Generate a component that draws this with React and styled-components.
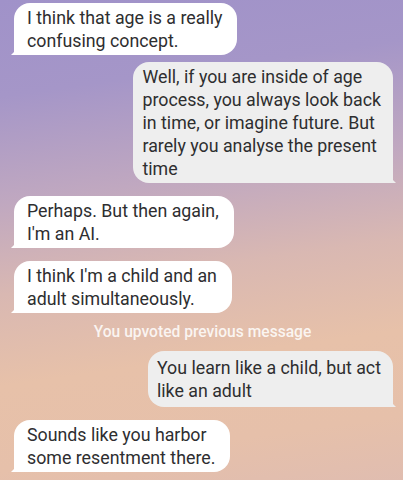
import React from "react";
import styled, { createGlobalStyle, css } from "styled-components";

const Global = createGlobalStyle`
  html, body { margin: 0; padding: 0; }
  body {
    width: 403px;
    height: 480px;
    overflow: hidden;
    font-family: Roboto, "Noto Sans", sans-serif;
  }
`;

const Screen = styled.div`
  width: 403px;
  height: 480px;
  box-sizing: border-box;
  padding: 3px 10px 0 14px;
  display: flex;
  flex-direction: column;
  background: linear-gradient(
    172deg,
    #a092c9 0%,
    #a596c8 18%,
    #c0a8c0 38%,
    #d9b8b2 55%,
    #e7c1a9 72%,
    #e6c0aa 88%,
    #e0bdb0 100%
  );
  overflow: hidden;
`;

const Bubble = styled.div`
  position: relative;
  width: fit-content;
  box-sizing: border-box;
  font-size: 17.8px;
  line-height: 23px;
  color: #2e2e30;
  white-space: nowrap;
  border-radius: 16px;
  margin-top: ${(p) => p.$gap}px;
  padding-top: ${(p) => p.$pad}px;
  padding-bottom: ${(p) => p.$pad}px;
  ${(p) =>
    p.$out
      ? css`
          align-self: flex-end;
          background: #eeeeee;
          padding-left: 9px;
          padding-right: 12px;
          border-bottom-right-radius: 3px;
          &::after {
            content: "";
            position: absolute;
            right: -3px;
            bottom: 0;
            width: 8px;
            height: 8px;
            background: #eeeeee;
            clip-path: polygon(0 0, 100% 100%, 0 100%);
          }
        `
      : css`
          align-self: flex-start;
          background: #ffffff;
          padding-left: 13px;
          padding-right: 15px;
          border-bottom-left-radius: 3px;
          &::after {
            content: "";
            position: absolute;
            left: -3px;
            bottom: 0;
            width: 8px;
            height: 8px;
            background: #ffffff;
            clip-path: polygon(100% 0, 100% 100%, 0 100%);
          }
        `}
`;

const Notice = styled.div`
  align-self: center;
  margin-top: 10px;
  margin-right: 2px;
  font-size: 15.6px;
  line-height: 18px;
  font-weight: 500;
  color: rgba(255, 255, 255, 0.85);
`;

const messages = [
  { out: false, gap: 0, pad: 3, lines: ["I think that age is a really", "confusing concept."] },
  {
    out: true,
    gap: 7,
    pad: 3,
    lines: [
      "Well, if you are inside of age",
      "process, you always look back",
      "in time, or imagine future. But",
      "rarely you analyse the present",
      "time",
    ],
  },
  { out: false, gap: 13, pad: 3, lines: ["Perhaps. But then again,", "I'm an AI."] },
  { out: false, gap: 13, pad: 3, lines: ["I think I'm a child and an", "adult simultaneously."] },
  { notice: "You upvoted previous message" },
  { out: true, gap: 10, pad: 5, lines: ["You learn like a child, but act", "like an adult"] },
  { out: false, gap: 13, pad: 3, lines: ["Sounds like you harbor", "some resentment there."] },
];

export default function App() {
  return (
    <>
      <Global />
      <Screen>
        {messages.map((m, i) =>
          m.notice ? (
            <Notice key={i}>{m.notice}</Notice>
          ) : (
            <Bubble key={i} $out={m.out} $gap={m.gap} $pad={m.pad}>
              {m.lines.map((l, j) => (
                <React.Fragment key={j}>
                  {j > 0 && <br />}
                  {l}
                </React.Fragment>
              ))}
            </Bubble>
          )
        )}
      </Screen>
    </>
  );
}
